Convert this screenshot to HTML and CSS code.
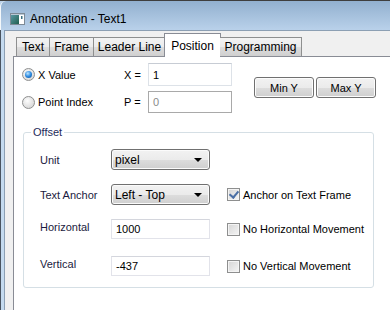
FILE: index.html
```html
<!DOCTYPE html>
<html>
<head>
<meta charset="utf-8">
<link rel="stylesheet" href="styles.css">
</head>
<body>
<div class="window">
  <div class="titlebar">
    <svg class="app-icon" width="15" height="12" viewBox="0 0 15 12">
      <defs>
        <linearGradient id="ig" x1="0" y1="0" x2="1" y2="1">
          <stop offset="0" stop-color="#5a98a3"/>
          <stop offset="1" stop-color="#1f5f4f"/>
        </linearGradient>
      </defs>
      <rect x="0.5" y="0.5" width="14" height="11" fill="#e8eef3" stroke="#7d8a96"/>
      <rect x="1" y="2" width="8" height="9" fill="url(#ig)"/>
      <rect x="9" y="2" width="5" height="9" fill="#ffffff"/>
      <rect x="11" y="3" width="1.5" height="3" fill="#3a6f80"/>
      <rect x="1" y="1" width="13" height="1" fill="#b9c7d4"/>
    </svg>
    <span class="title">Annotation - Text1</span>
  </div>
  <div class="frame">
    <div class="dialog">
      <div class="tabs">
        <div class="tab tab-text">Text</div>
        <div class="tab tab-frame">Frame</div>
        <div class="tab tab-leader">Leader Line</div>
        <div class="tab tab-active">Position</div>
        <div class="tab tab-prog">Programming</div>
      </div>
      <div class="panel">
        <div class="top-grid">
          <label class="radio-row r1">
            <span class="radio checked"></span>X Value
          </label>
          <span class="eq r1">X =</span>
          <div class="textbox focusbox r1">1</div>
          <div class="buttons">
            <div class="btn">Min Y</div>
            <div class="btn">Max Y</div>
          </div>
          <label class="radio-row r2">
            <span class="radio"></span>Point Index
          </label>
          <span class="eq r2">P =</span>
          <div class="textbox disabled r2">0</div>
        </div>
        <fieldset class="group">
          <legend>Offset</legend>
          <div class="row row-combo">
            <span class="lbl">Unit</span>
            <div class="combo">pixel<span class="arrow"></span></div>
          </div>
          <div class="row row-combo2">
            <span class="lbl">Text Anchor</span>
            <div class="combo">Left - Top<span class="arrow"></span></div>
            <span class="check checked"></span><span class="chk-lbl">Anchor on Text Frame</span>
          </div>
          <div class="row row-edit">
            <span class="lbl lbl-up">Horizontal</span>
            <div class="textbox edit">1000</div>
            <span class="check"></span><span class="chk-lbl">No Horizontal Movement</span>
          </div>
          <div class="row row-edit2">
            <span class="lbl lbl-up">Vertical</span>
            <div class="textbox edit">-437</div>
            <span class="check"></span><span class="chk-lbl">No Vertical Movement</span>
          </div>
        </fieldset>
      </div>
    </div>
  </div>
</div>
</body>
</html>
```

FILE: styles.css
```css
* { box-sizing: border-box; }
html, body { margin: 0; padding: 0; }
body {
  width: 390px;
  height: 310px;
  overflow: hidden;
  background: #fff;
  font-family: "Liberation Sans", Arial, sans-serif;
  font-size: 11px;
  color: #000;
}
.window {
  width: 390px;
  height: 310px;
  display: flex;
  flex-direction: column;
  background: #bcd3ea;
  border-top: 1px solid #3e3e3e;
  overflow: hidden;
}
.titlebar {
  height: 29px;
  flex: none;
  display: flex;
  align-items: center;
  padding-left: 9px;
  padding-top: 6px;
  background: linear-gradient(#92b0cf, #b9d1ea);
  border-left: 1px solid #f4f8fb;
  border-top-left-radius: 6px;
}
.app-icon { flex: none; }
.title {
  margin-left: 5px;
  font-size: 12px;
  color: #000;
}
.frame {
  flex: 1;
  display: flex;
  padding-left: 4px;
  background: linear-gradient(90deg, #4a5460 0, #4a5460 1px, #c4daef 1px);
}
.dialog {
  flex: 1;
  display: flex;
  flex-direction: column;
  background: #f0f0f0;
  border-left: 1px solid #8c9fb3;
  border-top: 1px solid #8c9fb3;
  padding-top: 2px;
  padding-left: 8px;
}
.tabs {
  display: flex;
  align-items: flex-end;
  height: 23px;
  padding-left: 2px;
  position: relative;
  z-index: 1;
}
.tab {
  height: 19px;
  border: 1px solid #8e8f8f;
  border-bottom: none;
  border-left: none;
  background: linear-gradient(#f3f3f3, #ebebeb 50%, #dddddd 51%, #cfcfcf);
  font-size: 12px;
  line-height: 18px;
  text-align: center;
  color: #000;
}
.tab-text { width: 34px; border-left: 1px solid #8e8f8f; margin-left: 1px; }
.tab-frame { width: 44px; }
.tab-leader { width: 72px; }
.tab-active {
  width: 57px;
  height: 24px;
  margin-left: -2px;
  margin-right: -1px;
  margin-bottom: -1px;
  background: #fff;
  border-left: 1px solid #898c95;
  border-color: #898c95;
  line-height: 22px;
  padding-top: 1px;
}
.tab-prog { width: 82px; }
.panel {
  flex: 1;
  background: #fff;
  border-left: 1px solid #898c95;
  border-top: 1px solid #898c95;
  padding: 6px 0 0 8px;
}
.top-grid {
  display: grid;
  grid-template-columns: 102px 24px 84px 22px 122px;
  grid-template-rows: 23px 22px;
  row-gap: 5px;
  align-items: center;
}
.r1 { grid-row: 1; }
.r2 { grid-row: 2; }
.radio-row {
  grid-column: 1;
  display: flex;
  align-items: center;
  gap: 3px;
}
.radio {
  width: 13px;
  height: 13px;
  border-radius: 50%;
  border: 1px solid #8e8f8f;
  background: radial-gradient(circle at 40% 35%, #fdfdfd 0, #e3e3e3 55%, #cfcfcf 100%);
  flex: none;
  position: relative;
}
.radio.checked::after {
  content: "";
  position: absolute;
  left: 2px;
  top: 2px;
  width: 7px;
  height: 7px;
  border-radius: 50%;
  background: radial-gradient(circle at 40% 35%, #bde6ff 0, #2d8ae0 50%, #0c4c8e 100%);
}
.eq { grid-column: 2; }
.textbox {
  border: 1px solid #e2e3ea;
  border-top-color: #abadb3;
  background: #fff;
  padding-left: 4px;
  display: flex;
  align-items: center;
  height: 100%;
}
.focusbox {
  grid-column: 3;
  border-color: #dde2e8;
  border-top-color: #c7ccd4;
}
.disabled {
  grid-column: 3;
  border-color: #a9a9a9;
  color: #8a8a8a;
}
.buttons {
  grid-column: 5;
  grid-row: 1 / span 2;
  display: flex;
  gap: 2px;
  align-self: start;
  margin-top: 14px;
}
.btn {
  width: 60px;
  height: 21px;
  border: 1px solid #707070;
  border-radius: 3px;
  background: linear-gradient(#f2f2f2, #ebebeb 50%, #dddddd 51%, #cfcfcf);
  box-shadow: inset 0 0 0 1px #fcfcfc;
  display: flex;
  align-items: center;
  justify-content: center;
  color: #000;
}
.group {
  margin: 13px 0 0 1px;
  width: 351px;
  height: 162px;
  border: 1px solid #d5dfe5;
  border-radius: 3px;
  padding: 10px 0 0 16px;
  min-width: 0;
}
.group legend {
  padding: 0 2px;
  margin-left: -9px;
  color: #1e2a5a;
  line-height: 13px;
}
.row {
  display: flex;
  align-items: center;
}
.row-combo { height: 21px; }
.row-combo2 { height: 21px; margin-top: 14px; }
.row-edit { height: 20px; margin-top: 14px; }
.row-edit2 { height: 20px; margin-top: 17px; }
.lbl {
  width: 71px;
  flex: none;
  color: #1a1a40;
}
.lbl-up { position: relative; top: -2px; }
.combo {
  width: 99px;
  height: 21px;
  flex: none;
  border: 1px solid #707070;
  border-radius: 3px;
  background: linear-gradient(#f2f2f2, #ebebeb 50%, #dddddd 51%, #cfcfcf);
  box-shadow: inset 0 0 0 1px #fbfbfb;
  padding-left: 3px;
  display: flex;
  align-items: center;
  position: relative;
  font-size: 12px;
}
.arrow {
  position: absolute;
  right: 7px;
  top: 8px;
  width: 0;
  height: 0;
  border-left: 4px solid transparent;
  border-right: 4px solid transparent;
  border-top: 4px solid #000;
}
.edit {
  width: 99px;
  flex: none;
  border-color: #e2e3ea;
  border-top-color: #d4d6dd;
  font-size: 11px;
}
.check {
  width: 13px;
  height: 13px;
  flex: none;
  margin-left: 17px;
  border: 1px solid #8e8f8f;
  background: linear-gradient(135deg, #d5d5d5, #f5f5f5);
  box-shadow: inset 0 0 0 1px #f4f4f4;
  position: relative;
}
.check.checked::after {
  content: "";
  position: absolute;
  left: 3px;
  top: 0px;
  width: 4px;
  height: 7px;
  border-right: 2px solid #4a6fa5;
  border-bottom: 2px solid #4a6fa5;
  transform: rotate(40deg);
}
.chk-lbl {
  margin-left: 3px;
  white-space: nowrap;
  color: #000;
}
```
